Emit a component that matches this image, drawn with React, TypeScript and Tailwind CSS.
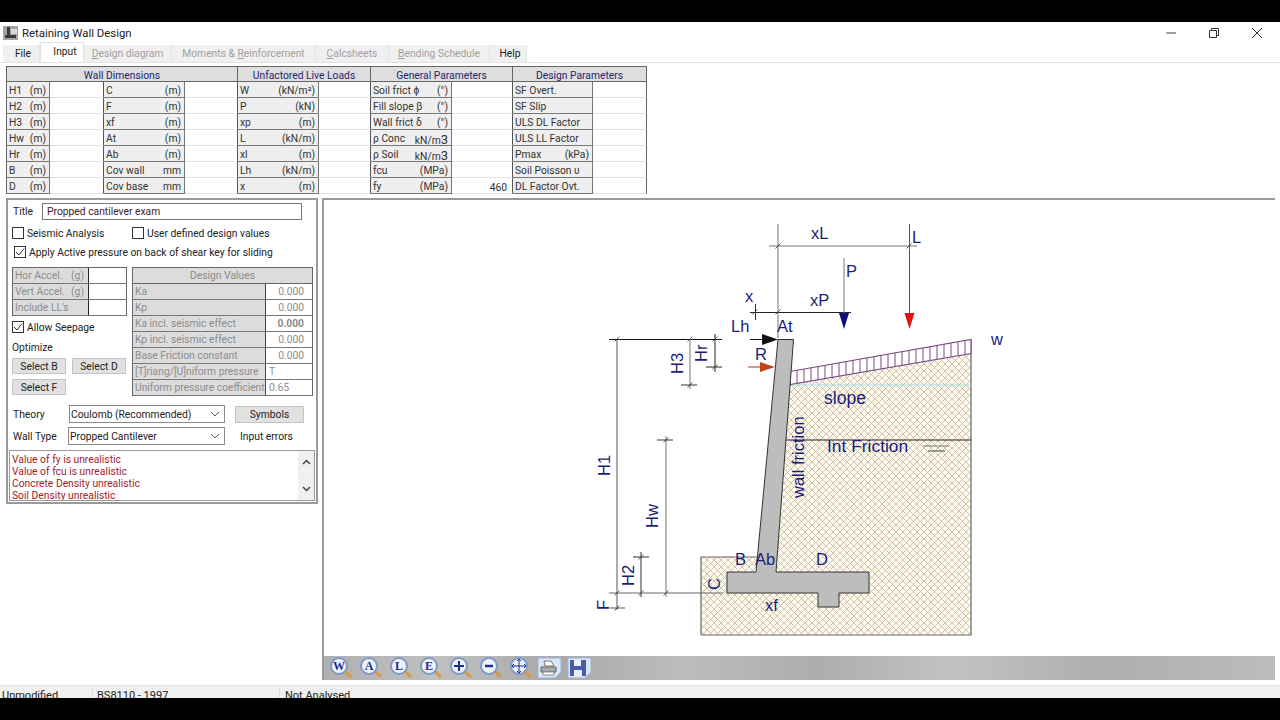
import React from "react";

const NAVY = "#1c1c78";

function Lbl({ a, b, cls = "" }: { a: React.ReactNode; b?: React.ReactNode; cls?: string }) {
  return (
    <div className={`flex h-4 items-center justify-between overflow-hidden whitespace-nowrap border-r border-b border-[#777] bg-[#efefef] pl-[2px] pr-[3px] pt-[4px] ${cls}`}>
      <span>{a}</span>
      {b !== undefined && <span>{b}</span>}
    </div>
  );
}
function Val({ v, last }: { v?: string; last?: boolean }) {
  return <div className={`h-4 border-b border-[#e2e2e2] bg-white pr-[5px] pt-[2px] text-right leading-4 ${last ? "border-r border-r-[#666]" : "border-r border-r-[#555]"}`}>{v}</div>;
}
function Head({ t, cls }: { t: string; cls: string }) {
  return <div className={`flex h-[15px] items-center justify-center border-r border-b border-[#666] bg-[#dedede] pt-[4px] text-[#24246e] ${cls}`}>{t}</div>;
}

const rows: React.ReactNode[][] = [
  ["H1", "(m)", "C", "(m)", "W", "(kN/m²)", "Soil frict ϕ", "(°)", "SF Overt.", undefined, ""],
  ["H2", "(m)", "F", "(m)", "P", "(kN)", "Fill slope β", "(°)", "SF Slip", undefined, ""],
  ["H3", "(m)", "xf", "(m)", "xp", "(m)", "Wall frict δ", "(°)", "ULS DL Factor", undefined, ""],
  ["Hw", "(m)", "At", "(m)", "L", "(kN/m)", "ρ Conc", <>kN/m<span className="text-[13px] leading-none">3</span></>, "ULS LL Factor", undefined, ""],
  ["Hr", "(m)", "Ab", "(m)", "xl", "(m)", "ρ Soil", <>kN/m<span className="text-[13px] leading-none">3</span></>, "Pmax", "(kPa)", ""],
  ["B", "(m)", "Cov wall", "mm", "Lh", "(kN/m)", "fcu", "(MPa)", "Soil Poisson υ", undefined, ""],
  ["D", "(m)", "Cov base", "mm", "x", "(m)", "fy", "(MPa)", "DL Factor Ovt.", undefined, ""],
];

function TopTable() {
  return (
    <div className="ml-[6px] mt-[3px] grid w-[641px] grid-cols-[43px_54px_81px_53px_81px_52px_81px_61px_80px_54px] border-t border-l border-[#666] text-[10.3px] leading-none text-[#333]">
      <Head t="Wall Dimensions" cls="col-span-4" />
      <Head t="Unfactored Live Loads" cls="col-span-2" />
      <Head t="General Parameters" cls="col-span-2" />
      <Head t="Design Parameters" cls="col-span-2" />
      {rows.map((r, i) => (
        <React.Fragment key={i}>
          <Lbl a={r[0]} b={r[1]} />
          <Val />
          <Lbl a={r[2]} b={r[3]} />
          <Val />
          <Lbl a={r[4]} b={r[5]} />
          <Val />
          <Lbl a={r[6]} b={r[7]} />
          <Val v={i === 6 ? "460" : ""} />
          <Lbl a={r[8]} b={r[9]} />
          <Val last />
        </React.Fragment>
      ))}
    </div>
  );
}

function Check({ on }: { on?: boolean }) {
  return (
    <span className="flex h-3 w-3 shrink-0 items-center justify-center border border-[#333] bg-white">
      {on && (
        <svg width="10" height="10" viewBox="0 0 10 10">
          <path d="M1 5 L4 8 L9 1.5" fill="none" stroke="#333" strokeWidth="1" />
        </svg>
      )}
    </span>
  );
}
function Btn({ t, cls }: { t: string; cls: string }) {
  return <div className={`flex items-center justify-center border border-[#c4c4c4] bg-[#e1e1e1] pt-[2px] text-[#222] ${cls}`}>{t}</div>;
}
function Select({ t, cls }: { t: string; cls: string }) {
  return (
    <div className={`flex items-center justify-between border border-[#8a8a8a] bg-white pl-[1px] pr-[3px] text-[#222] ${cls}`}>
      <span className="pt-[2px]">{t}</span>
      <svg width="10" height="6" viewBox="0 0 10 6" className="mr-[1px]">
        <path d="M1 1 L5 5 L9 1" fill="none" stroke="#555" strokeWidth="1" />
      </svg>
    </div>
  );
}

const dv: [string, string, string?][] = [
  ["Ka", "0.000"],
  ["Kp", "0.000"],
  ["Ka incl. seismic effect", "0.000", "b"],
  ["Kp incl. seismic effect", "0.000"],
  ["Base Friction constant", "0.000"],
  ["[T]riang/[U]niform pressure", "T", "l"],
  ["Uniform pressure coefficient", "0.65", "l"],
];

function LeftPanel() {
  return (
    <div className="ml-[6px] flex h-[306px] w-[312px] shrink-0 flex-col border-2 border-[#9a9a9a] bg-white text-[10.3px] leading-none text-[#222]">
      <div className="ml-[4px] mt-[3px] flex h-[17px] items-center">
        <span className="w-[30px] pl-[1px] pt-[2px]">Title</span>
        <div className="flex h-[17px] w-[260px] items-center border border-[#777] pl-[4px] pt-[2px] text-[#4a2020]">Propped cantilever exam</div>
      </div>
      <div className="ml-[4px] mt-[7px] flex h-[12px] items-center">
        <Check />
        <span className="ml-[3px] w-[105px] pt-[2px]">Seismic Analysis</span>
        <Check />
        <span className="ml-[3px] pt-[2px]">User defined design values</span>
      </div>
      <div className="ml-[6px] mt-[7px] flex h-[12px] items-center">
        <Check on />
        <span className="ml-[3px] pt-[2px]">Apply Active pressure on back of shear key for sliding</span>
      </div>
      <div className="ml-[4px] mt-[9px] flex">
        <div className="w-[120px]">
          <div className="w-[115px] border-t border-l border-[#666] text-[#8c8c8c]">
            {["Hor Accel.|(g)", "Vert Accel.|(g)", "Include LL's|"].map((t) => (
              <div key={t} className="flex h-4 border-b border-[#777]">
                <div className="flex w-[76px] items-center justify-between border-r border-[#222] bg-[#dcdcdc] pl-[2px] pr-[4px] pt-[2px]">
                  <span>{t.split("|")[0]}</span>
                  <span>{t.split("|")[1]}</span>
                </div>
                <div className="flex-1 border-r border-[#666] bg-white" />
              </div>
            ))}
          </div>
          <div className="mt-[5px] flex h-[12px] items-center">
            <Check on />
            <span className="ml-[3px] pt-[2px]">Allow Seepage</span>
          </div>
          <div className="mt-[9px] h-[12px] leading-[12px]">Optimize</div>
          <div className="mt-[4px] flex gap-[6px]">
            <Btn t="Select B" cls="h-4 w-[54px]" />
            <Btn t="Select D" cls="h-4 w-[54px]" />
          </div>
          <Btn t="Select F" cls="mt-[5px] h-4 w-[54px]" />
        </div>
        <div className="w-[181px] border-t border-l border-r border-[#666] text-[#8c8c8c]">
          <div className="flex h-4 items-center justify-center border-b border-[#666] bg-[#dcdcdc] pt-[2px]">Design Values</div>
          {dv.map(([a, b, k]) => (
            <div key={a} className="flex h-4 border-b border-[#777]">
              <div className="flex w-[133px] items-center overflow-hidden whitespace-nowrap border-r border-[#444] bg-[#dcdcdc] pl-[2px] pt-[2px]">{a}</div>
              <div className={`flex flex-1 items-center bg-white pt-[2px] ${k === "l" ? "justify-start pl-[3px]" : "justify-end pr-[8px]"} ${k === "b" ? "font-bold" : ""}`}>{b}</div>
            </div>
          ))}
        </div>
      </div>
      <div className="ml-[5px] mt-[9px] flex items-center">
        <span className="w-[56px] pt-[2px]">Theory</span>
        <Select t="Coulomb (Recommended)" cls="h-[18px] w-[156px]" />
        <Btn t="Symbols" cls="ml-[10px] h-[17px] w-[69px]" />
      </div>
      <div className="ml-[5px] mt-[4px] flex items-center">
        <span className="w-[55px] pt-[2px]">Wall Type</span>
        <Select t="Propped Cantilever" cls="h-[18px] w-[157px]" />
        <span className="ml-[15px] pt-[3px]">Input errors</span>
      </div>
      <div className="ml-[1px] mt-[5px] flex h-[51px] w-[306px] overflow-hidden border border-[#999]">
        <div className="flex-1 overflow-hidden pl-[2px] pt-[3px] leading-[12px] text-[#a0222e]">
          <div>Value of fy is unrealistic</div>
          <div>Value of fcu is unrealistic</div>
          <div>Concrete Density unrealistic</div>
          <div>Soil Density unrealistic</div>
        </div>
        <div className="flex w-[16px] flex-col items-center justify-between bg-[#f0f0f0] py-[8px]">
          <svg width="9" height="6" viewBox="0 0 9 6"><path d="M1 5 L4.5 1.5 L8 5" fill="none" stroke="#444" strokeWidth="1.5" /></svg>
          <svg width="9" height="6" viewBox="0 0 9 6"><path d="M1 1 L4.5 4.5 L8 1" fill="none" stroke="#444" strokeWidth="1.5" /></svg>
        </div>
      </div>
    </div>
  );
}

function T({ x, y, t, rot, s = 16.5 }: { x: number; y: number; t: string; rot?: boolean; s?: number }) {
  return (
    <text x={x} y={y} fill={NAVY} fontSize={s} fontFamily="Liberation Sans, sans-serif" transform={rot ? `rotate(-90 ${x} ${y})` : undefined}>
      {t}
    </text>
  );
}
function L({ d, c = "#777", w = 1 }: { d: string; c?: string; w?: number }) {
  return <path d={d} fill="none" stroke={c} strokeWidth={w} />;
}
function Tick({ x, y }: { x: number; y: number }) {
  return <path d={`M${x - 2.5} ${y + 2.5} L${x + 2.5} ${y - 2.5}`} stroke="#333" strokeWidth="0.8" />;
}

function Drawing() {
  const hatch: React.ReactNode[] = [];
  for (let x = 797; x <= 965; x += 7) {
    const y1 = 371.5 - ((x - 790) * 32) / 181;
    hatch.push(<line key={x} x1={x} x2={x} y1={y1} y2={y1 + 13.5} stroke="#7d4a82" strokeWidth="1" />);
  }
  return (
    <svg viewBox="324 200 951 457" className="block h-[457px] w-[951px]">
      <defs>
        <pattern id="xh" patternUnits="userSpaceOnUse" width="7" height="7">
          <rect width="7" height="7" fill="#fdfbf0" />
          <path d="M0 0 L7 7 M7 0 L0 7" stroke="#c6b293" strokeWidth="0.8" />
        </pattern>
      </defs>
      <path d="M790 384 L971 354 L971 635 L701 635 L701 557 L757 557 L776 572 Z" fill="url(#xh)" />
      <L d="M701 635 L971 635 L971 340 M701 635 L701 557 L757 557" c="#666" w={1.2} />
      <L d="M790 385 L971 385" c="#a8e0e0" />
      <path d="M790 371.5 L971 339.5 L971 353.5 L790 384.5 Z" fill="#fff" stroke="#7d4a82" strokeWidth="1.2" />
      {hatch}
      <L d="M785 440 L971 440" c="#222" />
      <L d="M923 446 L949 446" c="#777" />
      <L d="M928 451 L945 451" c="#444" />
      <path d="M778 339.5 L793.5 339.5 L776 572 L869 572 L869 593 L839 593 L839 607 L818 607 L818 593 L727 593 L727 572 L756 572 Z" fill="#bdbdbd" />
      <L d="M778 339.5 L793.5 339.5 L776 572 L869 572 L869 593 L839 593 L839 607 L818 607 L818 593 L727 593 L727 572 L756 572 L778 339.5" c="#333" />
      {/* dims */}
      <L d="M617 339 L617 610" c="#888" w={1.4} />
      <L d="M609 339.5 L722 339.5" c="#111" />
      <L d="M690 339 L690 389" />
      <L d="M681 385 L697 385" c="#333" />
      <L d="M715 334 L715 372" c="#222" />
      <L d="M706 367 L722 367" c="#222" />
      <L d="M666 436 L666 597" />
      <L d="M657 440 L673 440" c="#333" />
      <L d="M641 552 L641 597" c="#333" />
      <L d="M633 557 L649 557" c="#333" />
      <L d="M609 593 L723 593" c="#666" />
      <L d="M610 608 L625 608" c="#555" />
      <L d="M778 224 L778 338" c="#777" />
      <L d="M769 246 L917 246" c="#777" />
      <L d="M750 312.5 L851 312.5" c="#222" />
      <L d="M755.5 304 L755.5 320" c="#333" />
      <L d="M844 258 L844 313" c="#777" />
      <L d="M909.5 224 L909.5 246" c="#555" />
      <L d="M909.5 246 L909.5 315" c="#d02020" />
      {[[617, 339], [690, 339], [715, 339], [715, 367], [690, 385], [666, 440], [641, 557], [617, 593], [641, 593], [666, 593], [617, 608], [778, 246], [909, 246], [778, 312], [755, 312]].map(([x, y]) => (
        <Tick key={`${x}-${y}`} x={x} y={y} />
      ))}
      <path d="M839 313 L849 313 L844 329 Z" fill="#10107a" />
      <path d="M904.5 313 L914.5 313 L909.5 329 Z" fill="#e01414" />
      <L d="M750 339.5 L763 339.5" c="#111" />
      <path d="M762 334 L778 339.5 L762 345 Z" fill="#111" />
      <L d="M748 367 L760 367" c="#9a3a1a" />
      <path d="M760 362 L775 367 L760 372 Z" fill="#c0431e" />
      {/* labels */}
      <T x={811} y={239} t="xL" />
      <T x={912} y={243} t="L" />
      <T x={846} y={277} t="P" />
      <T x={810} y={306} t="xP" />
      <T x={745} y={302} t="x" />
      <T x={731} y={332} t="Lh" />
      <T x={777} y={332} t="At" />
      <T x={755} y={360} t="R" />
      <T x={991} y={345} t="w" />
      <T x={683} y={374} t="H3" rot />
      <T x={707} y={362} t="Hr" rot />
      <T x={610} y={476} t="H1" rot />
      <T x={658} y={528} t="Hw" rot />
      <T x={634} y={586} t="H2" rot />
      <T x={609} y={610} t="F" rot />
      <T x={720} y={590} t="C" rot />
      <T x={735} y={565} t="B" />
      <T x={755} y={565} t="Ab" />
      <T x={816} y={565} t="D" />
      <T x={765} y={611} t="xf" />
      <T x={824} y={404} t="slope" s={17.6} />
      <T x={827} y={452} t="Int Friction" s={17.4} />
      <T x={804} y={498} t="wall friction" rot />
    </svg>
  );
}

function Mag({ g }: { g: React.ReactNode }) {
  return (
    <svg width="26" height="24" viewBox="0 0 26 24" className="shrink-0">
      <path d="M15 15 L21 20" stroke="#d69a4a" strokeWidth="3.5" strokeLinecap="round" />
      <circle cx="10" cy="10" r="8" fill="#eef3fb" stroke="#7f9ac8" strokeWidth="2" />
      {g}
    </svg>
  );
}
const letter = (t: string) => (
  <text x="10" y="14" textAnchor="middle" fontSize="12" fontWeight="bold" fontFamily="Liberation Serif, serif" fill="#1e2c8c">{t}</text>
);

function Toolbar() {
  return (
    <div className="flex h-[24px] items-center gap-[4px] bg-[#b9b9b9] bg-[linear-gradient(90deg,#b0b0b0,#c0c0c0_12%,#a9a9a9_24%,#bcbcbc_38%,#adadad_52%,#c2c2c2_66%,#aeaeae_82%,#bcbcbc)] pl-[5px]">
      <Mag g={letter("W")} />
      <Mag g={letter("A")} />
      <Mag g={letter("L")} />
      <Mag g={letter("E")} />
      <Mag g={<path d="M5 10 H15 M10 5 V15" stroke="#1e2c8c" strokeWidth="2" />} />
      <Mag g={<path d="M6 10 H14" stroke="#1e2c8c" strokeWidth="2.5" />} />
      <Mag g={<path d="M3 10 H17 M10 3 V17 M3 10 L5 8 M3 10 L5 12 M17 10 L15 8 M17 10 L15 12 M10 3 L8 5 M10 3 L12 5 M10 17 L8 15 M10 17 L12 15" stroke="#1e2c8c" strokeWidth="1" fill="none" />} />
      <svg width="26" height="22" viewBox="0 0 26 22" className="-ml-[2px] shrink-0">
        <path d="M1 1 H24 V15 L18 21 H1 Z" fill="#d8e6f6" stroke="#9db4d8" />
        <path d="M7 4 H14 L17 9 H8 Z" fill="#fff" stroke="#777" />
        <path d="M4 10 H19 V15 H4 Z" fill="#a8a8a8" stroke="#666" />
        <path d="M6 15 H17 V18 H6 Z" fill="#fff" stroke="#888" />
      </svg>
      <svg width="26" height="22" viewBox="0 0 26 22" className="shrink-0">
        <path d="M1 1 H24 V15 L18 21 H1 Z" fill="#d8e6f6" stroke="#9db4d8" />
        <path d="M3 3 H19 V19 H3 Z" fill="#4a5ba8" />
        <path d="M7 3 H14 V9 H7 Z M7 13 H15 V19 H7 Z" fill="#e8eefa" />
      </svg>
    </div>
  );
}

function Tab({ children, w, on, active }: { children: React.ReactNode; w: string; on?: boolean; active?: boolean }) {
  return (
    <div className={`flex items-center justify-center border-r border-[#e2e2e2] pt-[2px] ${w} ${active ? "-mt-[2px] h-[20px] border-l border-t bg-white pb-[3px] pl-[6px] text-[#222]" : "h-[17px] bg-[#f0f0f0]"} ${on ? "pl-[4px] text-[#222]" : active ? "" : "text-[#a0a0a0]"}`}>
      {children}
    </div>
  );
}

export default function App() {
  return (
    <div className="relative flex h-[720px] w-[1280px] flex-col overflow-hidden bg-white font-['Roboto',sans-serif]">
      <div className="h-[22px] shrink-0 bg-black" />
      <div className="flex h-[22px] shrink-0 items-center pl-[3px] text-[11.4px] text-[#222]">
        <svg width="15" height="14" viewBox="0 0 15 14" className="shrink-0">
          <rect width="15" height="14" fill="#a4a4a4" />
          <path d="M4 1 H7 V9 H13 V12 H2 V9 H4 Z" fill="#3a3a3a" />
          <path d="M8 3 H14 V8 H8 Z" fill="#d8d8d8" />
        </svg>
        <span className="ml-[4px] pt-[2px]">Retaining Wall Design</span>
        <div className="ml-auto flex items-center">
          <svg width="10" height="10" viewBox="0 0 10 10" className="mr-[33px]"><path d="M0 5 H10" stroke="#444" /></svg>
          <svg width="10" height="10" viewBox="0 0 10 10" className="mr-[33px]"><path d="M0.5 2.5 H7.5 V9.5 H0.5 Z M2.5 2.5 V0.5 H9.5 V7.5 H7.5" fill="none" stroke="#333" /></svg>
          <svg width="10" height="10" viewBox="0 0 10 10" className="mr-[18px]"><path d="M0 0 L10 10 M10 0 L0 10" stroke="#333" /></svg>
        </div>
      </div>
      <div className="flex h-[19px] shrink-0 items-end border-b border-[#e2e2e2] pl-[3px] text-[10.3px] leading-none">
        <Tab w="w-[37px]" on>File</Tab>
        <Tab w="w-[44px]" active>Input</Tab>
        <Tab w="w-[88px]"><span><u>D</u>esign diagram</span></Tab>
        <Tab w="w-[144px]"><span>Moments &amp; <u>R</u>einforcement</span></Tab>
        <Tab w="w-[73px]"><span><u>C</u>alcsheets</span></Tab>
        <Tab w="w-[101px]"><span><u>B</u>ending Schedule</span></Tab>
        <Tab w="w-[37px]" on>Help</Tab>
      </div>
      <TopTable />
      <div className="mt-[4px] flex flex-1 overflow-hidden border-b border-[#e0e0e0]">
        <LeftPanel />
        <div className="ml-[4px] flex h-[482px] w-[953px] flex-col border-t-2 border-l-2 border-[#9a9a9a] bg-white">
          <div className="h-[457px] overflow-hidden"><Drawing /></div>
          <Toolbar />
        </div>
      </div>
      <div className="flex h-[34px] shrink-0 bg-[#f0f0f0] pt-[2px] text-[11px] text-[#222]">
        <div className="w-[93px] border-r border-[#ddd] pl-[2px]">Unmodified</div>
        <div className="w-[187px] border-r border-[#ddd] pl-[4px]">BS8110 - 1997</div>
        <div className="pl-[5px]">Not Analysed</div>
      </div>
      <div className="absolute bottom-0 left-0 h-[22px] w-full bg-black" />
    </div>
  );
}
